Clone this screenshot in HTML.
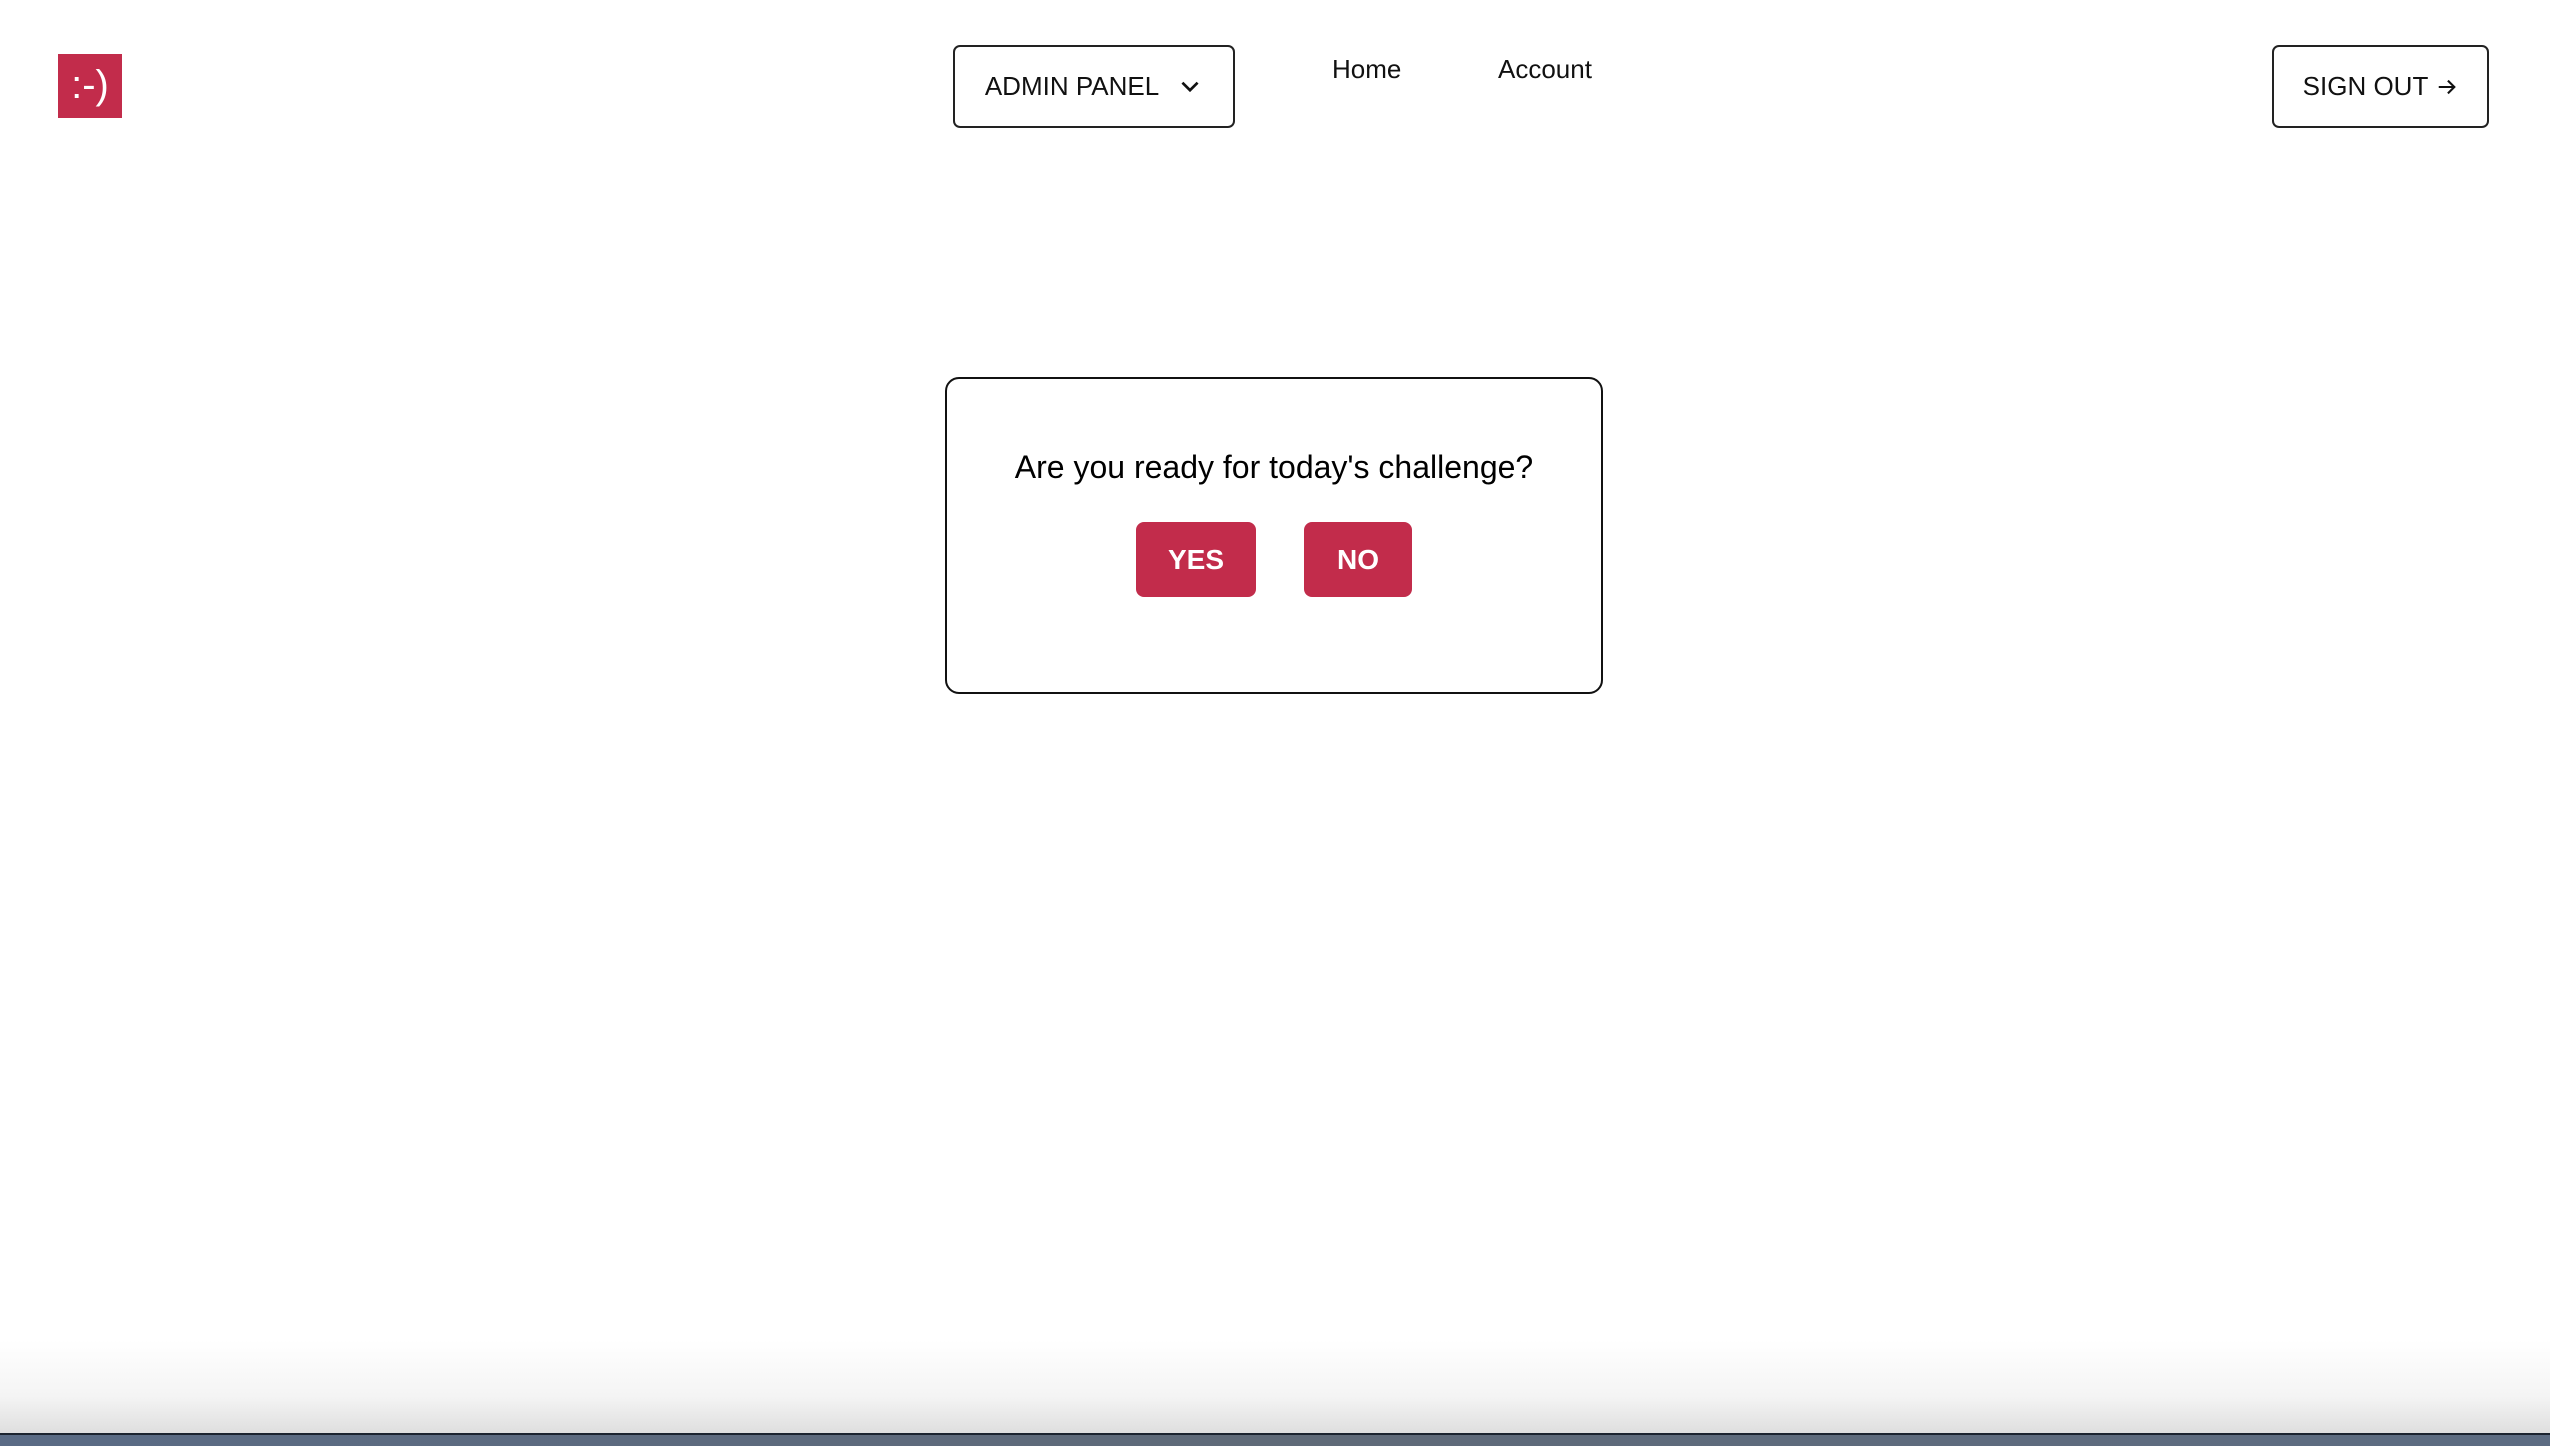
<!DOCTYPE html>
<html><head><style>
html,body{margin:0;padding:0;width:2550px;height:1446px;overflow:hidden;background:#fff;font-family:"Liberation Sans",sans-serif;}
.abs{position:absolute;}
.logo{left:58px;top:54px;width:64px;height:64px;background:#c22c4b;color:#fff;font-size:40px;line-height:62px;text-align:center;}
.btn{border:2px solid #222;border-radius:7px;box-sizing:border-box;display:flex;align-items:center;justify-content:center;font-size:26px;color:#111;}
.card{left:945px;top:377px;width:658px;height:317px;border:2px solid #111;border-radius:14px;box-sizing:border-box;}
.red{background:#c22c4b;color:#fff;font-weight:bold;font-size:28px;border-radius:8px;display:flex;align-items:center;justify-content:center;}
</style></head><body>
<div class="abs logo">:-)</div>
<div class="abs btn" style="left:953px;top:45px;width:282px;height:83px;">ADMIN PANEL
<svg width="26" height="26" viewBox="0 0 24 24" style="margin-left:18px"><path d="M5 8l7 7 7-7" fill="none" stroke="#111" stroke-width="2.5"/></svg></div>
<div class="abs" style="left:1332px;top:54px;font-size:26px;color:#111;">Home</div>
<div class="abs" style="left:1498px;top:54px;font-size:26px;color:#111;">Account</div>
<div class="abs btn" style="left:2272px;top:45px;width:217px;height:83px;">SIGN OUT
<svg width="22" height="22" viewBox="0 0 24 24" style="margin-left:8px"><path d="M3 12h17M13 5l7 7-7 7" fill="none" stroke="#111" stroke-width="2.3"/></svg></div>
<div class="abs card"></div>
<div class="abs" style="left:945px;width:658px;top:449px;text-align:center;font-size:32px;color:#000;">Are you ready for today's challenge?</div>
<div class="abs red" style="left:1136px;top:522px;width:120px;height:75px;">YES</div>
<div class="abs red" style="left:1304px;top:522px;width:108px;height:75px;">NO</div>
<div class="abs" style="left:0;top:1340px;width:2550px;height:94px;background:linear-gradient(#fff,#f4f4f4 60%,#dedede);"></div>
<div class="abs" style="left:0;top:1433px;width:2550px;height:13px;background:linear-gradient(90deg,#5a6b85,#5f6a78 50%,#5d6c82);border-top:2px solid #1c2430;box-sizing:border-box;"></div>
</body></html>
